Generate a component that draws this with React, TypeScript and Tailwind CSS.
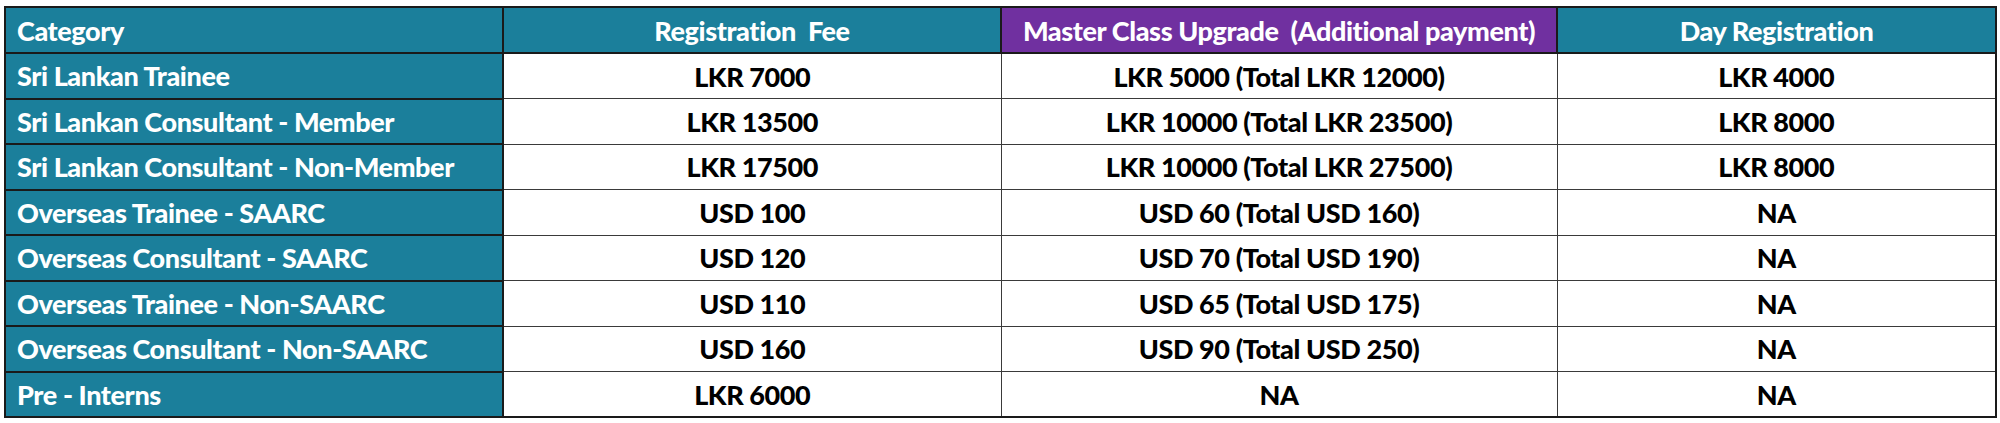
import React from "react";

const rows: [string, string, string, string][] = [
  ["Sri Lankan Trainee", "LKR 7000", "LKR 5000 (Total LKR 12000)", "LKR 4000"],
  ["Sri Lankan Consultant - Member", "LKR 13500", "LKR 10000 (Total LKR 23500)", "LKR 8000"],
  ["Sri Lankan Consultant - Non-Member", "LKR 17500", "LKR 10000 (Total LKR 27500)", "LKR 8000"],
  ["Overseas Trainee - SAARC", "USD 100", "USD 60 (Total USD 160)", "NA"],
  ["Overseas Consultant - SAARC", "USD 120", "USD 70 (Total USD 190)", "NA"],
  ["Overseas Trainee - Non-SAARC", "USD 110", "USD 65 (Total USD 175)", "NA"],
  ["Overseas Consultant - Non-SAARC", "USD 160", "USD 90 (Total USD 250)", "NA"],
  ["Pre - Interns", "LKR 6000", "NA", "NA"],
];

export default function App() {
  return (
    <div className="w-[2000px] h-[423px] bg-white pt-[6px] pl-[4px]" style={{ fontFamily: "Lato, 'Open Sans', sans-serif" }}>
      <table className="border-collapse table-fixed w-[1991px] border-2 border-[#1a1a1a] text-[27px] tracking-[-0.4px] font-black leading-none">
        <colgroup>
          <col className="w-[498px]" />
          <col className="w-[498px]" />
          <col className="w-[556px]" />
          <col className="w-[439px]" />
        </colgroup>
        <thead>
          <tr className="h-[46px]">
            <th className="bg-[#1b7f9b] text-white text-left pl-[11px] border-2 border-[#1a1a1a] font-black">Category</th>
            <th className="bg-[#1b7f9b] text-white text-center border-2 border-[#1a1a1a] font-black whitespace-pre">Registration  Fee</th>
            <th className="bg-[#7030a0] text-white text-center border-2 border-[#1a1a1a] font-black whitespace-pre">Master Class Upgrade  (Additional payment)</th>
            <th className="bg-[#1b7f9b] text-white text-center border-2 border-[#1a1a1a] font-black">Day Registration</th>
          </tr>
        </thead>
        <tbody>
          {rows.map((r, i) => (
            <tr key={i} className="h-[45.5px]">
              <td className="bg-[#1b7f9b] text-white text-left pl-[11px] border-2 border-[#1a1a1a]">{r[0]}</td>
              <td className="bg-white text-black text-center border border-[#3a3a3a] border-l-2 border-l-[#1a1a1a]">{r[1]}</td>
              <td className="bg-white text-black text-center border border-[#3a3a3a]">{r[2]}</td>
              <td className="bg-white text-black text-center border border-[#3a3a3a] border-r-2 border-r-[#1a1a1a]">{r[3]}</td>
            </tr>
          ))}
        </tbody>
      </table>
    </div>
  );
}
